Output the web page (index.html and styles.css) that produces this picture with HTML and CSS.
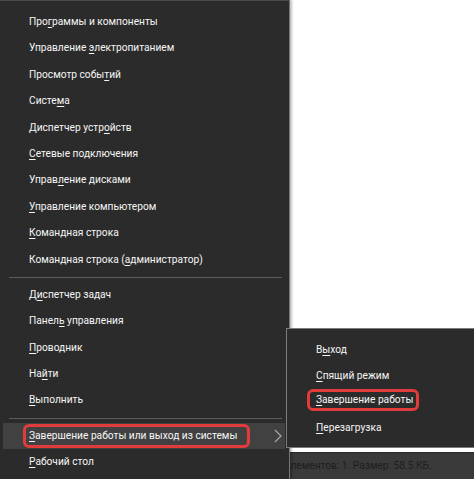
FILE: index.html
```html
<!DOCTYPE html>
<html lang="ru">
    <head>
        <meta charset="UTF-8" />
        <title>Win+X</title>
        <link rel="stylesheet" href="styles.css">
    </head>
    <body>
        <!-- Explorer window behind the menu -->
        <div class="explorer">
            <div class="explorer-body"></div>
            <div class="statusbar">элементов: 1. Размер: 58.5 КБ.</div>
        </div>

        <!-- Win+X menu -->
        <nav class="menu">
            <div class="item">Про<u>г</u>раммы и компоненты</div>
            <div class="item">Управление <u>э</u>лектропитанием</div>
            <div class="item">Просмотр собы<u>т</u>ий</div>
            <div class="item">Систе<u>м</u>а</div>
            <div class="item">Диспетчер устр<u>о</u>йств</div>
            <div class="item"><u>С</u>етевые подключения</div>
            <div class="item">Управ<u>л</u>ение дисками</div>
            <div class="item"><u>У</u>правление компьютером</div>
            <div class="item"><u>К</u>омандная строка</div>
            <div class="item">Командная строка (<u>а</u>дминистратор)</div>
            <div class="sep"></div>
            <div class="item">Д<u>и</u>спетчер задач</div>
            <div class="item">Панел<u>ь</u> управления</div>
            <div class="item"><u>П</u>роводник</div>
            <div class="item">На<u>й</u>ти</div>
            <div class="item"><u>В</u>ыполнить</div>
            <div class="sep"></div>
            <div class="item item-open">
                <span class="mark mark-main"><u>З</u>авершение работы или выход из системы</span>
                <svg class="chevron" width="8" height="14" viewBox="0 0 8 14">
                    <polyline points="1,1 7,7 1,13" fill="none" stroke="#a8a8a8" stroke-width="1.2" />
                </svg>
            </div>
            <div class="item"><u>Р</u>абочий стол</div>
        </nav>

        <!-- flyout submenu -->
        <div class="submenu">
            <div class="item">В<u>ы</u>ход</div>
            <div class="item"><u>С</u>пящий режим</div>
            <div class="item item-marked"><span class="mark mark-sub"><u>З</u>авершение работы</span></div>
            <div class="item"><u>П</u>ерезагрузка</div>
        </div>
    </body>
</html>
```

FILE: styles.css
```css
body {
    margin: 0;
    background-color: #fff;
    font-family: Roboto, 'Noto Sans', sans-serif;
    font-size: 10.2px;
    overflow: hidden;
}
u {
    text-decoration-thickness: 1px;
    text-underline-offset: 2px;
}

/* explorer window in the background */
.explorer {
    height: 479px;
    display: flex;
    flex-direction: column;
}
.explorer-body {
    flex: 1;
    background-color: #fff;
}
.statusbar {
    height: 26px;
    border-top: 1px solid #2a2a2a;
    background-color: #3a3a3a;
    color: #1e1e1e;
    padding-left: 285px;
    line-height: 26px;
    white-space: nowrap;
}

/* main menu */
.menu {
    position: absolute;
    left: 0;
    top: 0;
    width: 290px;
    height: 490px;
    box-sizing: border-box;
    padding-top: 8px;
    background-color: #2b2b2b;
    border-top: 1px solid #4a4a4a;
    border-right: 1px solid #777;
    box-shadow: 2px 0 2px rgba(0, 0, 0, 0.25);
    color: #f6f6f6;
}
.item {
    height: 26.4px;
    line-height: 26.4px;
    padding-left: 29px;
    white-space: nowrap;
}
.sep {
    height: 1px;
    margin: 4px 7px 4px 9px;
    background-color: #5c5c5c;
}
.item-open {
    display: flex;
    align-items: center;
    justify-content: space-between;
    margin: 0 4px 0 3px;
    padding-left: 26px;
    background-color: #414141;
}
.chevron {
    margin-right: 3px;
}

/* red annotation frames */
.mark {
    border: 3px solid #e23b3b;
    border-radius: 6px;
    line-height: 18px;
}
.mark-main {
    margin-left: -6px;
    padding: 0 10px 0 3px;
}
.mark-sub {
    margin-left: -9px;
    margin-bottom: 5px;
    padding: 0 3px 0 6px;
    line-height: 16px;
}

/* flyout submenu */
.submenu {
    position: absolute;
    left: 286px;
    top: 328px;
    width: 200px;
    height: 120px;
    box-sizing: border-box;
    padding-top: 8px;
    background-color: #2b2b2b;
    border: 1px solid #7c7c7c;
    color: #f6f6f6;
}
.submenu .item {
    height: 26px;
    line-height: 26px;
}
.submenu .item-marked {
    display: flex;
    align-items: center;
}
```
